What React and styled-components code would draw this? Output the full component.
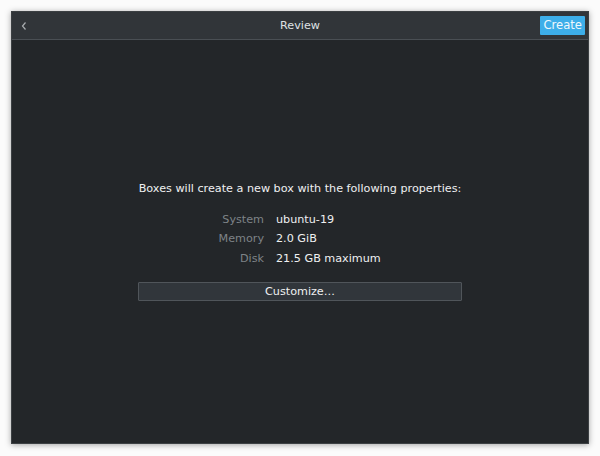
import React from "react";
import styled, { createGlobalStyle } from "styled-components";

const Global = createGlobalStyle`
  html, body { margin: 0; padding: 0; background: #fbfbfb; }
  body { font-family: "DejaVu Sans", "Noto Sans", sans-serif; }
`;

const Page = styled.div`
  width: 600px;
  height: 456px;
  padding: 11px;
  box-sizing: border-box;
`;

const Window = styled.div`
  width: 578px;
  height: 433px;
  display: flex;
  flex-direction: column;
  background: #232629;
  border: 1px solid #3c4043;
  box-sizing: border-box;
  box-shadow: 0 1px 6px rgba(0, 0, 0, 0.35);
`;

const HeaderBar = styled.div`
  height: 27px;
  flex: none;
  display: grid;
  grid-template-columns: 60px 1fr 60px;
  align-items: center;
  background: #313539;
  border-bottom: 1px solid #4a4f54;
  color: #eff0f1;
  font-size: 11.2px;
`;

const BackButton = styled.div`
  display: flex;
  align-items: center;
  padding-left: 8px;
  color: #a9adb0;
`;

const Title = styled.div`
  text-align: center;
  color: #dfe1e3;
`;

const CreateButton = styled.div`
  justify-self: end;
  margin-right: 3px;
  background: #3daee9;
  color: #eef8fd;
  font-size: 11.6px;
  height: 19px;
  line-height: 19px;
  padding: 0 3px;
  border-radius: 1px;
`;

const Body = styled.div`
  flex: 1;
  display: flex;
  align-items: center;
  justify-content: center;
`;

const Content = styled.div`
  width: 324px;
  display: flex;
  flex-direction: column;
  align-items: stretch;
  color: #eff0f1;
  font-size: 11.2px;
`;

const Intro = styled.div`
  text-align: center;
  white-space: nowrap;
  line-height: 14px;
`;

const Props = styled.div`
  margin-top: 17px;
  display: grid;
  grid-template-columns: 126px 1fr;
  column-gap: 12px;
  row-gap: 5.5px;
  line-height: 14px;
`;

const Label = styled.div`
  text-align: right;
  color: #7e8387;
`;

const Value = styled.div`
  color: #eff0f1;
`;

const CustomizeButton = styled.div`
  margin-top: 16.5px;
  height: 19px;
  box-sizing: border-box;
  border: 1px solid #50555a;
  background: #31363b;
  border-radius: 1px;
  text-align: center;
  line-height: 17px;
  color: #eff0f1;
`;

const rows = [
  ["System", "ubuntu-19"],
  ["Memory", "2.0 GiB"],
  ["Disk", "21.5 GB maximum"],
];

export default function App() {
  return (
    <>
      <Global />
      <Page>
        <Window>
          <HeaderBar>
            <BackButton>
              <svg width="8" height="10" viewBox="0 0 8 10">
                <path d="M5.5 1.5 L2.5 5 L5.5 8.5" fill="none" stroke="currentColor" strokeWidth="1.2" />
              </svg>
            </BackButton>
            <Title>Review</Title>
            <CreateButton>Create</CreateButton>
          </HeaderBar>
          <Body>
            <Content>
              <Intro>Boxes will create a new box with the following properties:</Intro>
              <Props>
                {rows.map(([k, v]) => (
                  <React.Fragment key={k}>
                    <Label>{k}</Label>
                    <Value>{v}</Value>
                  </React.Fragment>
                ))}
              </Props>
              <CustomizeButton>Customize…</CustomizeButton>
            </Content>
          </Body>
        </Window>
      </Page>
    </>
  );
}
